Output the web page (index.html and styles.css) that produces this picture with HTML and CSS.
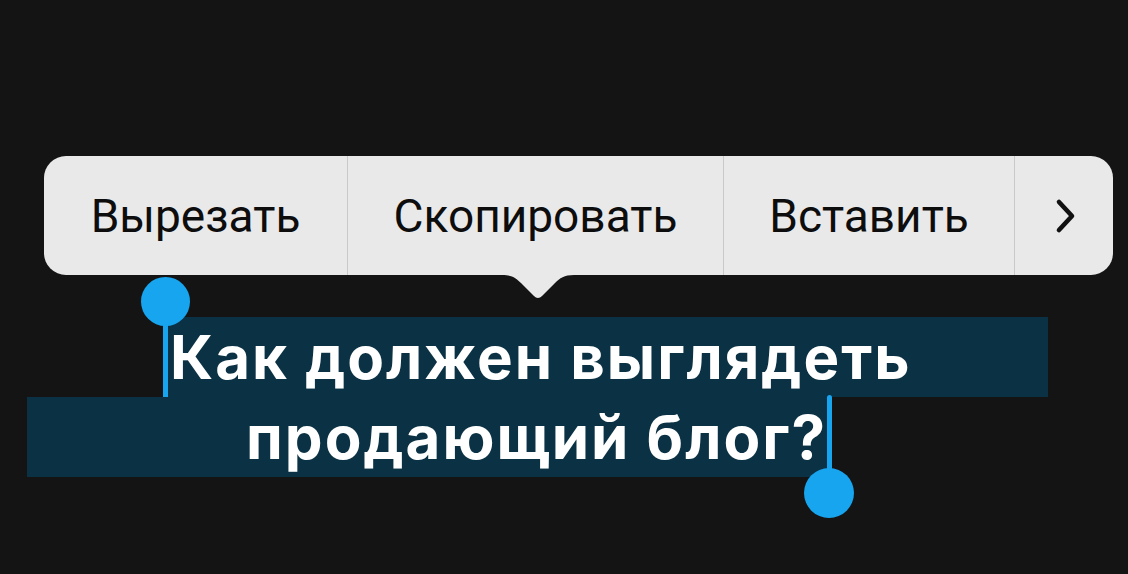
FILE: index.html
```html
<!DOCTYPE html>
<html lang="ru">
<head>
<meta charset="utf-8">
<title>Меню выделения</title>
<link rel="stylesheet" href="styles.css">
</head>
<body>
<div class="stage">
  <div class="menu">
    <div class="item item-cut">Вырезать</div>
    <div class="item item-copy">Скопировать</div>
    <div class="item item-paste">Вставить</div>
    <div class="item item-more">
      <svg class="chevron" width="24" height="36" viewBox="0 0 24 36"><path d="M5 4 L18 18 L5 32" fill="none" stroke="#111" stroke-width="4.6" stroke-linecap="round" stroke-linejoin="round"/></svg>
    </div>
    <svg class="pointer" width="72" height="24" viewBox="0 0 72 24"><path d="M0 0 H72 C62 0 58 3 53 8 L40 21 C37.5 23.5 34.5 23.5 32 21 L19 8 C14 3 10 0 0 0 Z" fill="#e9e9e9"/></svg>
  </div>
  <div class="heading">
    <div class="line line-first"><span class="text">Как должен выглядеть</span></div>
    <div class="line line-last"><span class="text">продающий блог?</span></div>
  </div>
</div>
</body>
</html>
```

FILE: styles.css
```css
html, body {
  margin: 0;
  padding: 0;
  background: #141414;
}

body {
  width: 1128px;
  height: 574px;
  overflow: hidden;
}

.stage {
  padding-top: 156px;
  padding-left: 27px;
  display: flex;
  flex-direction: column;
}

.menu {
  position: relative;
  margin-left: 17px;
  width: 1069px;
  height: 119px;
  background: #e9e9e9;
  border-radius: 22px;
  display: flex;
  align-items: stretch;
  font-family: Roboto, "Liberation Sans", sans-serif;
  font-size: 46px;
  color: #0d0d0d;
}

.item {
  display: flex;
  align-items: center;
  justify-content: center;
  box-sizing: border-box;
  border-right: 1.5px solid #c9c9c9;
}

.item-cut { width: 304px; }
.item-copy { width: 376px; }
.item-paste { width: 291px; }
.item-more { width: 98px; border-right: none; }

.chevron {
  display: block;
  margin-left: 4px;
}

.pointer {
  position: absolute;
  left: 458px;
  top: 119px;
  display: block;
}

.heading {
  margin-top: 42px;
  width: 1021px;
  font-family: Inter, "Noto Sans", sans-serif;
  font-weight: 700;
  font-size: 60px;
  letter-spacing: 2px;
  line-height: 80px;
  color: #ffffff;
  display: flex;
  flex-direction: column;
}

.line {
  position: relative;
  height: 80px;
  background: #0b3244;
  box-sizing: border-box;
  white-space: nowrap;
}

.line-first {
  margin-left: 138px;
  width: 883px;
  padding-left: 5px;
}

.line-last {
  width: 803px;
  padding-right: 3px;
  text-align: right;
}

.line-first::before {
  content: "";
  position: absolute;
  left: -2px;
  top: -6px;
  width: 5px;
  height: 89px;
  border-radius: 3px;
  background: #17a5f0;
}

.line-first::after {
  content: "";
  position: absolute;
  left: -24px;
  top: -40px;
  width: 49px;
  height: 49px;
  border-radius: 50%;
  background: #17a5f0;
}

.line-last::before {
  content: "";
  position: absolute;
  right: -2px;
  top: -2px;
  width: 5px;
  height: 90px;
  border-radius: 3px;
  background: #17a5f0;
}

.line-last::after {
  content: "";
  position: absolute;
  right: -24px;
  top: 71px;
  width: 50px;
  height: 50px;
  border-radius: 50%;
  background: #17a5f0;
}
```
